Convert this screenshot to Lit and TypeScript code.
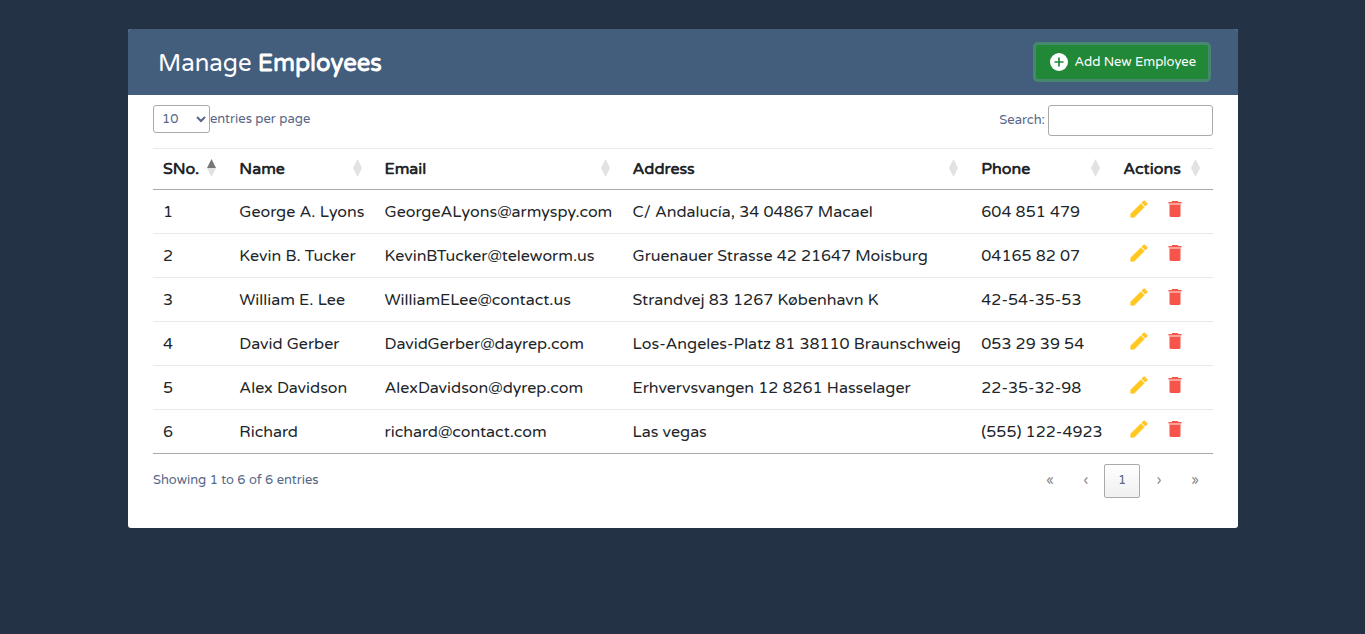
import { LitElement, html, css } from "lit";
import { customElement, state } from "lit/decorators.js";

interface Employee {
  id: number;
  name: string;
  email: string;
  address: string;
  phone: string;
}

const EMPLOYEES: Employee[] = [
  { id: 1, name: "George A. Lyons", email: "GeorgeALyons@armyspy.com", address: "C/ Andalucía, 34 04867 Macael", phone: "604 851 479" },
  { id: 2, name: "Kevin B. Tucker", email: "KevinBTucker@teleworm.us", address: "Gruenauer Strasse 42 21647 Moisburg", phone: "04165 82 07" },
  { id: 3, name: "William E. Lee", email: "WilliamELee@contact.us", address: "Strandvej 83 1267 København K", phone: "42-54-35-53" },
  { id: 4, name: "David Gerber", email: "DavidGerber@dayrep.com", address: "Los-Angeles-Platz 81 38110 Braunschweig", phone: "053 29 39 54" },
  { id: 5, name: "Alex Davidson", email: "AlexDavidson@dyrep.com", address: "Erhvervsvangen 12 8261 Hasselager", phone: "22-35-32-98" },
  { id: 6, name: "Richard", email: "richard@contact.com", address: "Las vegas", phone: "(555) 122-4923" },
];

const COLUMNS = [
  { label: "SNo.", cls: "c-no" },
  { label: "Name", cls: "c-name" },
  { label: "Email", cls: "c-email" },
  { label: "Address", cls: "c-address" },
  { label: "Phone", cls: "c-phone" },
  { label: "Actions", cls: "c-actions" },
];

const addIcon = html`<svg class="add-icon" viewBox="0 0 18 18" aria-hidden="true">
  <circle cx="9" cy="9" r="9" fill="#fff" />
  <path d="M9 4.500v9M4.500 9h9" fill="none" stroke="#218838" stroke-width="1.7" />
</svg>`;

const editIcon = html`<svg viewBox="0 0 24 24" aria-hidden="true">
  <path fill="currentColor" stroke="currentColor" stroke-width="0.7" d="M3 17.250V21h3.750L17.810 9.940l-3.750-3.750L3 17.250zM20.710 7.040a1 1 0 0 0 0-1.410l-2.340-2.340a1 1 0 0 0-1.410 0l-1.830 1.830 3.750 3.750 1.830-1.830z"/>
</svg>`;

const deleteIcon = html`<svg viewBox="0 0 22 22" aria-hidden="true">
  <path fill="currentColor" d="M8 3h6v1h3.500v1H4.500V4H8zM5.500 7h11v10.500a1.500 1.500 0 0 1-1.500 1.500h-8a1.500 1.500 0 0 1-1.500-1.500z"/>
  <path fill="currentColor" opacity="0.55" d="M4.500 5h13v1l-1 1h-11l-1-1z"/>
</svg>`;

@customElement("app-root")
export class AppRoot extends LitElement {
  @state() private employees = EMPLOYEES;

  static styles = css`
    :host {
      display: block;
      box-sizing: border-box;
      min-height: 100vh;
      padding: 29px 15px 29px 16px;
      background: #243245;
      color: #212529;
      font-family: "Varela Round", "Noto Sans", sans-serif;
      font-size: 16px;
      line-height: 24px;
    }
    * { box-sizing: border-box; }
    button, input, select { font: inherit; color: inherit; }
    .card {
      max-width: 1110px;
      margin: 0 auto;
      background: #fff;
      border-radius: 3px;
      overflow: hidden;
    }
    .title {
      display: flex;
      align-items: center;
      justify-content: space-between;
      padding: 13px 30px;
      background: #435d7d;
      color: #fff;
    }
    h2 { margin: 0; padding-top: 4px; font-size: 24px; line-height: 36px; font-weight: 400; }
    .add {
      display: flex;
      align-items: center;
      gap: 6px;
      height: 34px;
      padding: 0 12px 0 14px;
      border: 0;
      border-radius: 2px;
      background: #218838;
      box-shadow: 0 0 0 3px rgba(72, 180, 97, 0.5);
      font-size: 13px;
      font-weight: 500;
      color: #fff;
    }
    .add-icon { width: 18px; height: 18px; }
    .body { padding: 10px 25px 30px; }
    .tools, .foot {
      display: flex;
      justify-content: space-between;
      font-size: 13px;
      line-height: 20px;
      color: #566787;
    }
    .tools { margin-bottom: 12px; }
    .length { display: flex; align-items: center; height: 28px; }
    .search { display: flex; gap: 3px; }
    .search label { padding-top: 5px; }
    select {
      width: 57px;
      height: 28px;
      padding: 0 4px;
      border: 1px solid #aaa;
      border-radius: 3px;
      background: transparent;
    }
    .search input {
      width: 165px;
      height: 31px;
      padding: 5px;
      border: 1px solid #aaa;
      border-radius: 3px;
      background: transparent;
    }
    table { width: 100%; border-collapse: collapse; table-layout: fixed; }
    th, td { padding: 0 10px; text-align: left; white-space: nowrap; }
    th { height: 41px; border-top: 1px solid #e9e9e9; border-bottom: 1px solid #aaa; }
    td { height: 44px; border-bottom: 1px solid #e9e9e9; }
    tbody tr:last-child td { border-bottom-color: #aaa; }
    .c-no { width: 7.2%; }
    .c-name { width: 13.7%; }
    .c-email { width: 23.4%; }
    .c-address { width: 32.9%; }
    .c-phone { width: 13.4%; }
    .c-actions { width: 9.4%; }
    .sort {
      display: flex;
      align-items: center;
      justify-content: space-between;
      width: 100%;
      padding: 0 3px 0 0;
      border: 0;
      background: none;
      font-weight: 700;
    }
    .arrows { width: 9px; height: 18px; flex: none; margin-bottom: 2px; color: #e1e3e3; }
    .c-no .sort { justify-content: flex-start; gap: 8px; }
    .c-actions .sort { justify-content: flex-start; gap: 10px; }
    .up { fill: currentColor; }
    .sorted .up { fill: #777; }
    .down { fill: currentColor; }
    .actions { display: flex; gap: 14px; padding-left: 5px; }
    .actions a { display: flex; margin-bottom: 5px; }
    .actions svg { width: 22px; height: 22px; }
    .edit { color: #ffc720; }
    .delete { color: #f7554a; }
    .foot { padding-top: 10px; }
    .info { padding-top: 6px; }
    .pages { display: flex; }
    .page {
      width: 36px;
      height: 34px;
      padding: 0 0 2px;
      border: 1px solid transparent;
      border-radius: 2px;
      background: none;
      color: #7f7f7f;
    }
    .current {
      margin-right: 1px;
      border-color: #aaa;
      background: linear-gradient(#fff, #f0f0f0);
      color: #566787;
    }
  `;

  render() {
    return html`
      <main class="card">
        <header class="title">
          <h2>Manage <b>Employees</b></h2>
          <button class="add">${addIcon}<span>Add New Employee</span></button>
        </header>
        <div class="body">
          <div class="tools">
            <div class="length">
              <select id="length"><option>10</option><option>25</option><option>50</option></select>
              <label for="length">entries per page</label>
            </div>
            <div class="search">
              <label for="search">Search:</label>
              <input id="search" type="search" />
            </div>
          </div>
          <table>
            <thead>
              <tr>
                ${COLUMNS.map(
                  (c, i) => html`<th class=${c.cls} scope="col">
                    <button class="sort ${i === 0 ? "sorted" : ""}">
                      <span>${c.label}</span>
                      <svg class="arrows" viewBox="0 0 9 18" aria-hidden="true">
                        <path class="up" d="M4.500 0L9 9H0z" /><path class="down" d="M0 9h9L4.500 18z" />
                      </svg>
                    </button>
                  </th>`
                )}
              </tr>
            </thead>
            <tbody>
              ${this.employees.map(
                (e) => html`<tr>
                  <td>${e.id}</td>
                  <td>${e.name}</td>
                  <td>${e.email}</td>
                  <td>${e.address}</td>
                  <td>${e.phone}</td>
                  <td>
                    <div class="actions">
                      <a class="edit" href="#edit" aria-label="Edit">${editIcon}</a>
                      <a class="delete" href="#delete" aria-label="Delete">${deleteIcon}</a>
                    </div>
                  </td>
                </tr>`
              )}
            </tbody>
          </table>
          <div class="foot">
            <div class="info">Showing 1 to 6 of 6 entries</div>
            <nav class="pages" aria-label="Pagination">
              <button class="page">«</button>
              <button class="page">‹</button>
              <button class="page current">1</button>
              <button class="page">›</button>
              <button class="page">»</button>
            </nav>
          </div>
        </div>
      </main>
    `;
  }
}
